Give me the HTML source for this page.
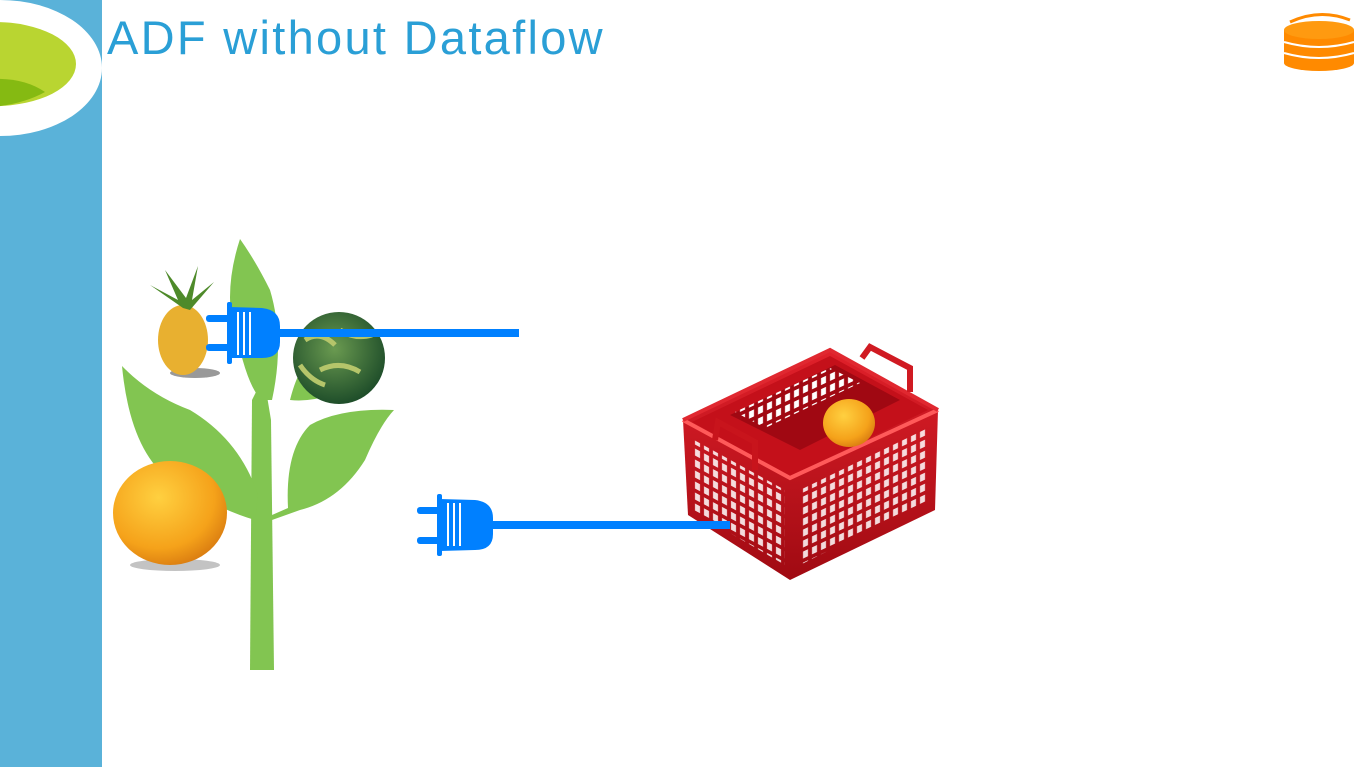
<!DOCTYPE html>
<html><head><style>
body{margin:0;width:1365px;height:767px;overflow:hidden;background:#fff;position:relative;font-family:"Liberation Sans","DejaVu Sans",sans-serif}
h1{position:absolute;left:107px;top:10px;margin:0;font-weight:normal;font-size:47px;color:#2a9fd6;letter-spacing:2.3px}
</style></head><body>
<svg width="1365" height="767" style="position:absolute;left:0;top:0">
<defs>
<radialGradient id="or" cx="0.4" cy="0.35" r="0.7"><stop offset="0" stop-color="#ffd040"/><stop offset="0.7" stop-color="#f5a21a"/><stop offset="1" stop-color="#d87a10"/></radialGradient>
<radialGradient id="wm" cx="0.45" cy="0.4" r="0.6"><stop offset="0" stop-color="#6a9a50"/><stop offset="1" stop-color="#1f4e2a"/></radialGradient>
<linearGradient id="rb" x1="0" y1="0" x2="0" y2="1"><stop offset="0" stop-color="#e0202a"/><stop offset="1" stop-color="#a00a12"/></linearGradient>
<pattern id="hl" width="9" height="11" patternUnits="userSpaceOnUse" patternTransform="skewY(28)"><rect x="2" y="2" width="5" height="7" fill="#fff" opacity="0.85"/></pattern>
<pattern id="hr" width="9" height="11" patternUnits="userSpaceOnUse" patternTransform="skewY(-25)"><rect x="2" y="2" width="5" height="7" fill="#fff" opacity="0.85"/></pattern>
<pattern id="hb" width="9" height="11" patternUnits="userSpaceOnUse" patternTransform="skewY(-25)"><rect x="2" y="2" width="5" height="7" fill="#fff"/></pattern>
</defs>
<rect x="0" y="0" width="102" height="767" fill="#5ab2d9"/>
<ellipse cx="0" cy="68" rx="102" ry="68" fill="#fff"/>
<ellipse cx="-5" cy="64" rx="81" ry="42" fill="#b9d531"/>
<path d="M-20 80 Q20 75 45 92 Q20 106 -20 108Z" fill="#85ba12"/>
<g fill="#82c551">
<path d="M250 670 L274 670 L271 420 L266 390 L262 380 L252 400 Z"/>
<path d="M240 239 Q220 300 240 350 Q250 390 262 400 L272 400 Q285 340 270 290 Q255 260 240 239Z"/>
<path d="M122 366 Q130 450 170 480 Q220 510 255 520 L258 495 Q240 440 190 410 Q150 395 122 366Z"/>
<path d="M394 410 Q340 408 310 425 Q285 450 288 508 L272 515 L272 520 L300 510 Q340 500 365 460 Q380 425 394 410Z"/>
<path d="M290 400 Q300 360 320 350 L330 395 Q310 402 290 400Z"/>
</g>
<ellipse cx="195" cy="373" rx="25" ry="5" fill="#555" opacity="0.6"/>
<ellipse cx="183" cy="340" rx="25" ry="35" fill="#e8b030"/>
<path d="M183 308 L150 285 L178 300 L165 270 L186 298 L198 266 L192 300 L214 282 L190 310Z" fill="#4e8a2a"/>
<circle cx="339" cy="358" r="46" fill="url(#wm)"/>
<path d="M305 340 Q320 330 335 345 M320 370 Q340 360 360 372 M340 330 Q355 340 372 335 M300 365 Q310 380 325 385" stroke="#b5c56a" stroke-width="5" fill="none"/>
<ellipse cx="175" cy="565" rx="45" ry="6" fill="#888" opacity="0.5"/>
<ellipse cx="170" cy="513" rx="57" ry="52" fill="url(#or)"/>
<g fill="#0080ff">
<rect x="206" y="315" width="26" height="7" rx="3"/>
<rect x="206" y="344" width="26" height="7" rx="3"/>
<rect x="227" y="302" width="5" height="62" rx="2"/>
<path d="M230 307 L262 308 Q280 310 280 326 L280 342 Q280 358 262 358 L230 358Z"/>
<rect x="278" y="329" width="241" height="8"/>
<rect x="417" y="507" width="26" height="7" rx="3"/>
<rect x="417" y="537" width="26" height="7" rx="3"/>
<rect x="437" y="494" width="5" height="62" rx="2"/>
<path d="M440 499 L475 500 Q493 502 493 518 L493 534 Q493 550 475 550 L440 551Z"/>
</g>
<g stroke="#fff" stroke-width="2">
<line x1="238" y1="312" x2="238" y2="355"/><line x1="244" y1="312" x2="244" y2="355"/><line x1="250" y1="312" x2="250" y2="355"/>
<line x1="448" y1="503" x2="448" y2="546"/><line x1="454" y1="503" x2="454" y2="546"/><line x1="460" y1="503" x2="460" y2="546"/>
</g>
<!-- basket -->
<path d="M683 420 L830 350 L938 410 L935 510 L790 580 L688 515Z" fill="url(#rb)"/>
<path d="M692 422 L830 356 L928 410 L790 476Z" fill="#c4101a"/>
<path d="M730 415 L835 365 L900 400 L800 450Z" fill="#a00812"/>
<path d="M735 412 L830 368 L860 383 L765 428Z" fill="url(#hb)"/>
<path d="M694 440 L785 490 L785 565 L694 512Z" fill="url(#hl)"/>
<path d="M800 490 L928 428 L928 500 L800 565Z" fill="url(#hr)"/>
<path d="M683 420 L790 478 L938 410" fill="none" stroke="#ff5a5a" stroke-width="4"/>
<path d="M683 420 L830 350 L938 410" fill="none" stroke="#e02830" stroke-width="4"/>
<path d="M862 358 L870 347 L910 368 L910 392" fill="none" stroke="#d01a22" stroke-width="6"/>
<path d="M715 440 L718 422 L755 442 L755 470" fill="none" stroke="#c8141c" stroke-width="6"/>
<ellipse cx="849" cy="423" rx="26" ry="24" fill="url(#or)"/>
<rect x="490" y="521" width="240" height="8" fill="#0080ff"/>
<g>
<ellipse cx="1319" cy="63" rx="35" ry="8" fill="#ff8a00"/>
<rect x="1284" y="30" width="70" height="33" fill="#ff8a00"/>
<ellipse cx="1319" cy="30" rx="35" ry="9" fill="#ff9a10"/>
<path d="M1284 42 Q1319 52 1354 42 M1284 53 Q1319 63 1354 53" stroke="#fff" stroke-width="2" fill="none"/>
<path d="M1290 22 Q1320 8 1350 20" stroke="#ff8a00" stroke-width="3" fill="none"/>
</g>
</svg>
<h1>ADF without Dataflow</h1>
</body></html>
